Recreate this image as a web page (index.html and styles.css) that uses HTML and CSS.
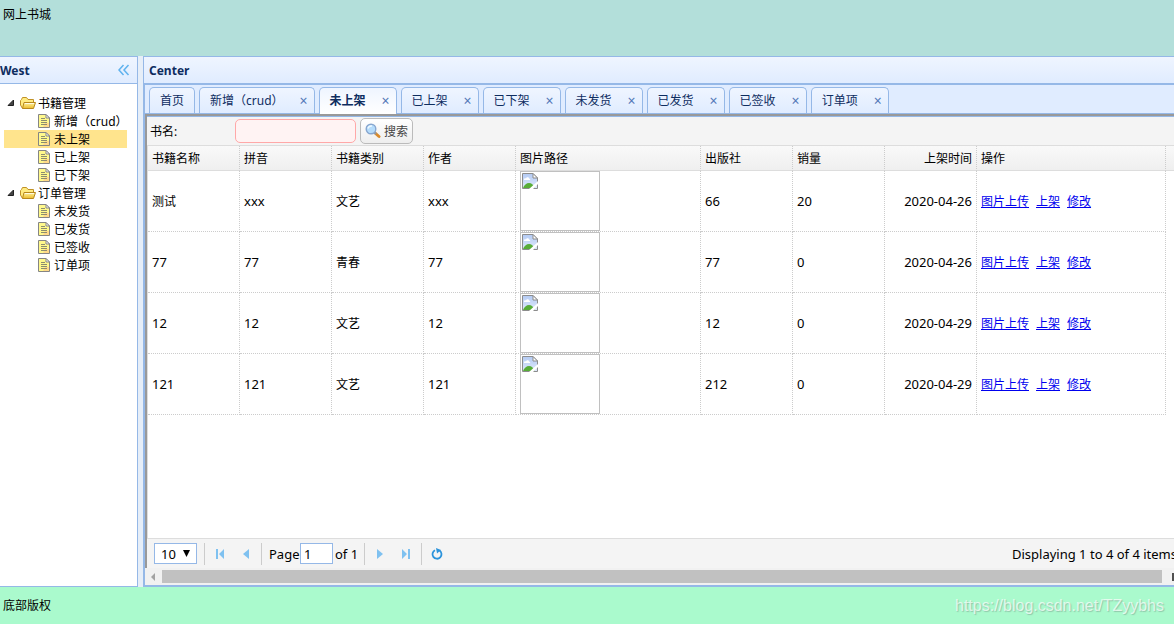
FILE: index.html
```html
<!DOCTYPE html>
<html lang="zh-CN">
<head>
<meta charset="utf-8">
<title>网上书城</title>
<link rel="stylesheet" href="styles.css">
</head>
<body>
<svg class="sprite" aria-hidden="true">
  <defs>
    <linearGradient id="gold" x1="0" y1="0" x2="0" y2="1"><stop offset="0" stop-color="#fff3a0"/><stop offset="1" stop-color="#ecbb2c"/></linearGradient>
    <linearGradient id="sky" x1="0" y1="0" x2="0" y2="1"><stop offset="0" stop-color="#b4cbf4"/><stop offset="1" stop-color="#dfe9fb"/></linearGradient>
    <symbol id="folder" viewBox="0 0 16 16">
      <path d="M2.500 13.500L.5 10V5.500l1-1 1-2h4l1.500 2h5.500v3" fill="#ffeb80" stroke="#c09126"/>
      <path d="M2.500 13.500L4 7.500h11.500L13.500 13.500z" fill="url(#gold)" stroke="#b8871c"/>
      <path d="M4.800 8.500h9.200" stroke="#fffbe0"/>
    </symbol>
    <symbol id="file" viewBox="0 0 12 14">
      <path d="M.5.500h7.500l3.500 3.500v9.500H.5z" fill="#fff98c" stroke="#858585"/>
      <path d="M7 9h4v4H5z" fill="#ffd98a"/>
      <path d="M8 .5V4h3.500z" fill="#fff" stroke="#858585"/>
      <path d="M3 4.500h4M3 6.500h6M3 8.500h6M3 10.500h6" stroke="#8c8c70"/>
    </symbol>
    <symbol id="arrow" viewBox="0 0 8 8"><path d="M6.500 1v5.500H1z" fill="#444" stroke="#222"/></symbol>
    <symbol id="broken" viewBox="0 0 16 16">
      <path d="M.5.500h10.500l4.500 4.500v10.500H.5z" fill="url(#sky)" stroke="#8c8c8c"/>
      <path d="M2 6.500c0-1.300 1.500-1.500 2-1 .5-1.800 3-1.500 3 0 1.200 0 1.500 1 1 1.500H2z" fill="#fff"/>
      <path d="M1 15c1-3 3.500-5 6-5s4.500 1.500 5.500 5z" fill="#58ad38"/>
      <path d="M11 .5V5h4.500z" fill="#fff" stroke="#8c8c8c"/>
      <path d="M7 16l9-8v3l-5 5z" fill="#fff"/>
    </symbol>
  </defs>
</svg>

<header class="north">网上书城</header>

<div class="middle">
  <aside class="west">
    <div class="panel-header">
      <h2>West</h2>
      <button class="collapse" type="button" aria-label="Collapse"><svg width="12" height="12" viewBox="0 0 12 12"><path d="M5.500 1L1 6l4.500 5M10.500 1L6 6l4.500 5" fill="none" stroke="#5fb2ee" stroke-width="1.500"/></svg></button>
    </div>
    <ul class="tree">
      <li>
        <div class="node"><svg class="arrow"><use href="#arrow"/></svg><svg class="folder"><use href="#folder"/></svg>书籍管理</div>
        <ul>
          <li class="node leaf"><svg class="file"><use href="#file"/></svg>新增（crud）</li>
          <li class="node leaf selected"><svg class="file"><use href="#file"/></svg>未上架</li>
          <li class="node leaf"><svg class="file"><use href="#file"/></svg>已上架</li>
          <li class="node leaf"><svg class="file"><use href="#file"/></svg>已下架</li>
        </ul>
      </li>
      <li>
        <div class="node"><svg class="arrow"><use href="#arrow"/></svg><svg class="folder"><use href="#folder"/></svg>订单管理</div>
        <ul>
          <li class="node leaf"><svg class="file"><use href="#file"/></svg>未发货</li>
          <li class="node leaf"><svg class="file"><use href="#file"/></svg>已发货</li>
          <li class="node leaf"><svg class="file"><use href="#file"/></svg>已签收</li>
          <li class="node leaf"><svg class="file"><use href="#file"/></svg>订单项</li>
        </ul>
      </li>
    </ul>
  </aside>

  <main class="center">
    <div class="panel-header"><h2>Center</h2></div>
    <div class="workspace">
      <nav class="tabs">
        <div class="tab home"><span>首页</span></div>
        <div class="tab"><span>新增（crud）</span><button type="button" aria-label="Close">×</button></div>
        <div class="tab active"><span>未上架</span><button type="button" aria-label="Close">×</button></div>
        <div class="tab"><span>已上架</span><button type="button" aria-label="Close">×</button></div>
        <div class="tab"><span>已下架</span><button type="button" aria-label="Close">×</button></div>
        <div class="tab"><span>未发货</span><button type="button" aria-label="Close">×</button></div>
        <div class="tab"><span>已发货</span><button type="button" aria-label="Close">×</button></div>
        <div class="tab"><span>已签收</span><button type="button" aria-label="Close">×</button></div>
        <div class="tab"><span>订单项</span><button type="button" aria-label="Close">×</button></div>
      </nav>
      <section class="content">
        <form class="toolbar">
          <label for="bookName">书名:</label>
          <input id="bookName" type="text">
          <button type="button"><svg width="16" height="16" viewBox="0 0 16 16"><path d="M9.500 9.500l4.500 4" stroke="#d98a2b" stroke-width="3" stroke-linecap="round"/><path d="M9 9l2 2" stroke="#8a97a8" stroke-width="2"/><circle cx="6" cy="6" r="4.800" fill="#b5dcfb" stroke="#87a6cf" stroke-width="1.400"/><path d="M3 5.500c.5-2 2-2.700 4-2.500" fill="none" stroke="#eef8ff" stroke-width="1.500"/></svg><span>搜索</span></button>
        </form>
        <div class="grid">
          <table>
            <colgroup><col class="c-std"><col class="c-std"><col class="c-std"><col class="c-std"><col class="c-img"><col class="c-std"><col class="c-std"><col class="c-std"><col class="c-act"><col></colgroup>
            <thead><tr><th>书籍名称</th><th>拼音</th><th>书籍类别</th><th>作者</th><th>图片路径</th><th>出版社</th><th>销量</th><th class="date">上架时间</th><th>操作</th><th class="rest"></th></tr></thead>
            <tbody>
              <tr><td class="zh">测试</td><td>xxx</td><td class="zh">文艺</td><td>xxx</td><td><div class="picture"><svg><use href="#broken"/></svg></div></td><td>66</td><td>20</td><td class="date">2020-04-26</td><td class="zh"><div class="actions"><a href="#">图片上传</a><a href="#">上架</a><a href="#">修改</a></div></td><td class="rest"></td></tr>
              <tr><td>77</td><td>77</td><td class="zh">青春</td><td>77</td><td><div class="picture"><svg><use href="#broken"/></svg></div></td><td>77</td><td>0</td><td class="date">2020-04-26</td><td class="zh"><div class="actions"><a href="#">图片上传</a><a href="#">上架</a><a href="#">修改</a></div></td><td class="rest"></td></tr>
              <tr><td>12</td><td>12</td><td class="zh">文艺</td><td>12</td><td><div class="picture"><svg><use href="#broken"/></svg></div></td><td>12</td><td>0</td><td class="date">2020-04-29</td><td class="zh"><div class="actions"><a href="#">图片上传</a><a href="#">上架</a><a href="#">修改</a></div></td><td class="rest"></td></tr>
              <tr><td>121</td><td>121</td><td class="zh">文艺</td><td>121</td><td><div class="picture"><svg><use href="#broken"/></svg></div></td><td>212</td><td>0</td><td class="date">2020-04-29</td><td class="zh"><div class="actions"><a href="#">图片上传</a><a href="#">上架</a><a href="#">修改</a></div></td><td class="rest"></td></tr>
            </tbody>
          </table>
        </div>
        <div class="pager">
          <div class="page-size">
            <select aria-label="Rows per page"><option>10</option></select>
            <svg width="8" height="8" viewBox="0 0 8 8"><path d="M0 0h7L3.500 7z" fill="#000"/></svg>
          </div>
          <i class="sep"></i>
          <button type="button" aria-label="First page"><svg viewBox="0 0 12 12"><path d="M2 1h2v10H2zM10 1v10L5 6z"/></svg></button>
          <button type="button" aria-label="Previous page"><svg viewBox="0 0 12 12"><path d="M9 1v10L3 6z"/></svg></button>
          <i class="sep"></i>
          <label for="pageNo">Page</label>
          <input id="pageNo" type="text" value="1">
          <span class="total">of 1</span>
          <i class="sep"></i>
          <button type="button" aria-label="Next page"><svg viewBox="0 0 12 12"><path d="M3 1v10l6-5z"/></svg></button>
          <button type="button" aria-label="Last page"><svg viewBox="0 0 12 12"><path d="M8 1h2v10H8zM2 1v10l5-5z"/></svg></button>
          <i class="sep"></i>
          <button type="button" aria-label="Refresh"><svg viewBox="0 0 12 12"><path d="M4 2.200A4.500 4.500 0 1 0 8.500 2.500" fill="none" stroke="#2b93db" stroke-width="1.800"/><path d="M5 0l5 2-4 3.500z" fill="#2b93db"/></svg></button>
          <span class="info">Displaying 1 to 4 of 4 items</span>
        </div>
      </section>
      <div class="scrollbar">
        <svg width="6" height="8" viewBox="0 0 6 8"><path d="M5 0v8L1 4z" fill="#a3a3a3"/></svg>
        <div class="thumb"></div>
        <svg width="6" height="8" viewBox="0 0 6 8"><path d="M5 0v8l3-4z" fill="#505050"/><path d="M4 0h2v8H4z" fill="#505050"/></svg>
      </div>
    </div>
  </main>
</div>

<footer class="south"><span>底部版权</span><span class="watermark">https://blog.csdn.net/TZyybhs</span></footer>
</body>
</html>
```
FILE: styles.css
```css
* { box-sizing: border-box; }

body {
  margin: 0;
  height: 100vh;
  display: flex;
  flex-direction: column;
  overflow: hidden;
  background: #e6eef8;
  color: #000;
  font: 12px/18px "Noto Sans", "Noto Sans CJK SC", sans-serif;
}

button, input, select { font: inherit; color: inherit; }
button { padding: 0; border: 0; background: none; }
ul { list-style: none; margin: 0; padding: 0; }
svg { flex: none; display: block; }
.sprite { position: absolute; width: 0; height: 0; }

.north { height: 56px; padding: 6px 3px; background: #b3dfda; }

.middle { flex: 1; min-height: 0; display: flex; gap: 5px; }

.panel-header {
  flex: none;
  height: 28px;
  display: flex;
  align-items: center;
  justify-content: space-between;
  border: solid #95b8e7;
  border-width: 1px 0;
  background: linear-gradient(#eff5ff, #e0ecff);
}
.panel-header h2 { margin: 0; padding-top: 2px; font-size: 12px; line-height: 18px; color: #0e2d5f; }

.west {
  width: 138px;
  border-right: 1px solid #95b8e7;
  border-bottom: 1px solid #95b8e7;
  background: #fff;
}
.collapse { margin-right: 7px; }

.tree { padding: 10px 10px 10px 4px; }
.node { height: 18px; display: flex; align-items: flex-start; padding-left: 3px; line-height: 20px; white-space: nowrap; }
.leaf { gap: 4px; padding-left: 34px; }
.selected { background: #ffe48d; }
.arrow { width: 8px; height: 8px; margin: 5px 5px 0 0; }
.folder { width: 16px; height: 16px; margin: 1px 2px 0 0; }
.file { width: 12px; height: 14px; margin-top: 2px; }

.center {
  flex: 1;
  min-width: 0;
  display: flex;
  flex-direction: column;
  border-left: 1px solid #95b8e7;
  border-bottom: 1px solid #95b8e7;
}
.center .panel-header { padding-left: 5px; }

.workspace {
  flex: 1;
  min-height: 0;
  display: flex;
  flex-direction: column;
  border: solid #95b8e7;
  border-width: 1px 0 1px 1px;
  background: #e0ecff;
}

.tabs { display: flex; gap: 4px; padding: 2px 4px 0; border-bottom: 1px solid #95b8e7; }
.tab {
  height: 26px;
  display: flex;
  align-items: center;
  gap: 15px;
  padding: 0 5px 0 10px;
  border: 1px solid #95b8e7;
  border-bottom: 0;
  border-radius: 5px 5px 0 0;
  background: linear-gradient(#eff5ff, #e0ecff);
  color: #0e2d5f;
  white-space: nowrap;
}
.tab.home { padding-right: 10px; }
.tab.active { height: 27px; margin-bottom: -1px; background: linear-gradient(#eff5ff, #fff); font-weight: bold; }
.tab button { width: 10px; line-height: 18px; font-size: 14px; font-weight: normal; color: #5478b8; }

.content {
  flex: 1;
  min-height: 0;
  display: flex;
  flex-direction: column;
  border: solid #999;
  border-width: 2px 0 0 2px;
  background: #fff;
}

.toolbar {
  height: 30px;
  display: flex;
  align-items: center;
  padding-left: 3px;
  border-top: 1px solid #95b8e7;
  border-bottom: 1px solid #ddd;
  background: #f4f4f4;
}
.toolbar label { width: 85px; padding-top: 2px; }
.toolbar input {
  width: 121px;
  height: 24px;
  margin-right: 4px;
  border: 1px solid #ffa8a8;
  border-radius: 5px;
  background: #fff3f3;
}
.toolbar button {
  height: 26px;
  display: flex;
  align-items: center;
  gap: 3px;
  padding: 0 4px;
  border: 1px solid #bbb;
  border-radius: 5px;
  background: linear-gradient(#fff, #eee);
  color: #444;
}
.toolbar span { padding-top: 2px; }

.grid { flex: 1; min-height: 0; overflow: hidden; border-left: 1px solid #ddd; }
table { width: 100%; table-layout: fixed; border-collapse: separate; border-spacing: 0; }
.c-std { width: 92px; }
.c-img { width: 185px; }
.c-act { width: 189px; }
th, td { padding: 0 4px; border-right: 1px dotted #ccc; border-bottom: 1px dotted #ccc; text-align: left; white-space: nowrap; }
th {
  height: 25px;
  padding-top: 2px;
  border-bottom: 1px solid #ddd;
  background: linear-gradient(#f9f9f9, #efefef);
  font-weight: normal;
}
td { height: 61px; font-size: 13px; }
.zh { padding-top: 2px; font-size: 12px; }
.date { padding-left: 0; text-align: right; }
.rest { padding: 0; border-right: 0; }
td.rest { border-bottom: 0; }
.picture { width: 80px; height: 60px; padding: 1px; border: 1px solid #c0c0c0; }
.picture svg { width: 16px; height: 16px; }
.actions { display: flex; gap: 7px; }
.actions a { color: #00e; }

.pager {
  height: 30px;
  display: flex;
  align-items: center;
  padding-left: 7px;
  border-top: 1px solid #ddd;
  background: #f4f4f4;
  font-size: 13px;
  white-space: nowrap;
  overflow: hidden;
}
.page-size { position: relative; }
.page-size select {
  display: block;
  width: 43px;
  height: 21px;
  padding: 0 6px;
  appearance: none;
  border: 1px solid #95b8e7;
  border-radius: 0;
  background: #fff;
}
.page-size svg { position: absolute; right: 6px; top: 7px; pointer-events: none; }
.sep { flex: none; width: 1px; height: 22px; margin: 0 7px; background: #ccc; }
.pager button { width: 16px; height: 22px; display: grid; place-items: center; }
.pager button + button { margin-left: 10px; }
.pager button svg { width: 12px; height: 12px; fill: #7fc1f0; }
.pager label { width: 31px; }
.pager input { width: 33px; height: 21px; padding: 0 3px; border: 1px solid #95b8e7; }
.total { width: 22px; margin-left: 2px; }
.info { margin-left: auto; margin-right: -3px; }

.scrollbar { height: 17px; display: flex; align-items: center; gap: 6px; padding-left: 5px; background: #f1f1f1; }
.thumb { flex: 1; height: 13px; background: #c1c1c1; }

.south {
  height: 37px;
  display: flex;
  align-items: center;
  justify-content: space-between;
  padding: 0 10px 0 3px;
  background: #aafacd;
}
.watermark {
  font: 16px/20px "Liberation Sans", Arial, sans-serif;
  color: rgba(255, 255, 255, 0.7);
  text-shadow: 1px 1px 1px rgba(120, 150, 135, 0.5);
}
```
